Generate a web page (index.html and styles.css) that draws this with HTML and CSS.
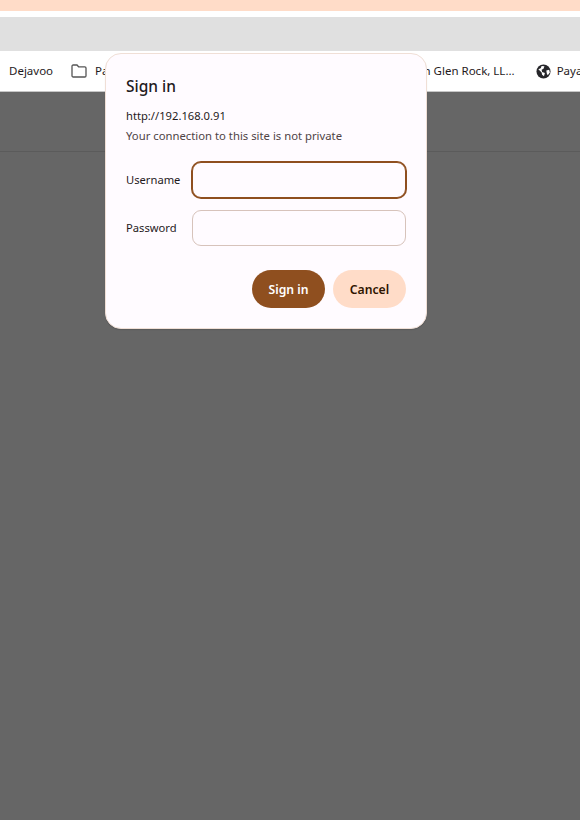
FILE: index.html
```html
<!DOCTYPE html>
<html lang="en">
<head>
<meta charset="utf-8">
<title>Sign in</title>
<link rel="stylesheet" href="styles.css">
</head>
<body>
<div class="peach"></div>
<div class="tabgap"></div>
<div class="toolbar"></div>
<div class="bookmarks">
  <span class="bm-cut"></span>
  <span class="bm bm-dejavoo"><span class="bm-text">Dejavoo</span></span>
  <span class="bm bm-folder">
    <svg class="ic-folder" viewBox="0 0 16 14" width="16" height="14"><path d="M1 2.200C1 1.500 1.500 1 2.200 1H6l1.600 1.800h6.200c.7 0 1.200.5 1.200 1.200v7.800c0 .7-.5 1.200-1.200 1.200H2.200C1.500 13 1 12.500 1 11.800Z" fill="none" stroke="#555" stroke-width="1.300"/></svg>
    <span class="bm-text">Pa</span>
  </span>
  <span class="bm bm-glen"><span class="bm-text">n Glen Rock, LL...</span></span>
  <span class="bm bm-paya">
    <svg class="ic-globe" viewBox="0 0 16 16" width="15" height="15"><circle cx="8" cy="8" r="7.500" fill="#26262a"/><path d="M2.500 5.500 5 4.500l1-2.500 3 .5-1 2.500-2 1 .5 2.500 3 1-1 3.500-2-1.500-.5-2.500ZM11 7l3-1 .8 3-2.300 3-1-2Z" fill="#fff"/></svg>
    <span class="bm-text">Paya</span>
  </span>
</div>
<div class="page">
  <div class="pagebar"></div>
</div>
<form class="dialog">
  <h1 class="title">Sign in</h1>
  <div class="origin">http://192.168.0.91</div>
  <div class="note">Your connection to this site is not private</div>
  <div class="fields">
    <label class="lbl">Username</label>
    <div class="input input-focus"></div>
    <label class="lbl">Password</label>
    <div class="input"></div>
  </div>
  <div class="actions">
    <button type="button" class="btn btn-primary">Sign in</button>
    <button type="button" class="btn btn-tonal">Cancel</button>
  </div>
</form>
</body>
</html>
```
FILE: styles.css
```css
* { box-sizing: border-box; }
html, body { margin: 0; height: 100%; }
body {
  width: 580px;
  height: 820px;
  overflow: hidden;
  position: relative;
  background: #fff;
  font-family: "Noto Sans", "Open Sans", sans-serif;
  color: #1f1a1c;
  display: flex;
  flex-direction: column;
}
.peach { height: 11px; background: #ffdcc8; }
.tabgap { height: 6px; background: #fff; }
.toolbar { height: 34px; background: #e0e0e0; }
.bookmarks {
  height: 41px;
  background: #fff;
  border-bottom: 1px solid #c6c6c6;
  display: flex;
  align-items: center;
  font-size: 11.500px;
  white-space: nowrap;
  overflow: hidden;
}
.bm { display: flex; align-items: center; }
.bm-text { padding-bottom: 2px; }
.bm-cut { width: 1px; height: 5px; background: #c58cf0; }
.bm-dejavoo { margin-left: 9px; }
.bm-folder { margin-left: 18px; gap: 8px; }
.bm-glen { margin-left: 315px; }
.bm-paya { margin-left: 21px; gap: 6px; }
.page { flex: 1; background: #666; }
.pagebar { height: 60px; border-bottom: 1px solid #5b5b5b; }
.dialog {
  position: absolute;
  left: 105px;
  top: 53px;
  width: 322px;
  height: 276px;
  background: #fffbff;
  border: 1px solid #f0dfd6;
  border-radius: 16px;
  box-shadow: 0 1px 1px rgba(0, 0, 0, 0.12);
  padding: 22px 20px 20px;
  display: flex;
  flex-direction: column;
}
.title { margin: 0; font-size: 15.500px; font-weight: 500; line-height: 20px; }
.origin { margin-top: 11px; font-size: 11.200px; line-height: 17px; }
.note { margin-top: 3px; font-size: 11.300px; line-height: 17px; color: #4f4446; }
.fields {
  margin-top: 18px;
  display: grid;
  grid-template-columns: 66px 214px;
  row-gap: 12px;
  align-items: center;
}
.lbl { font-size: 11.200px; padding-bottom: 2px; }
.input {
  height: 36px;
  border: 1px solid #d7c3bb;
  border-radius: 9px;
  background: #fffbff;
}
.input-focus { border-color: #8f4f1f; box-shadow: 0 0 0 1px #8f4f1f; }
.actions {
  margin-top: 24px;
  display: flex;
  justify-content: flex-end;
  gap: 8px;
}
.btn {
  height: 38px;
  width: 73px;
  border: 0;
  border-radius: 19px;
  font-family: inherit;
  font-size: 12.200px;
  font-weight: 600;
}
.btn-primary { background: #8f4f1f; color: #fff; }
.btn-tonal { background: #ffdcc8; color: #2f1500; }
```
